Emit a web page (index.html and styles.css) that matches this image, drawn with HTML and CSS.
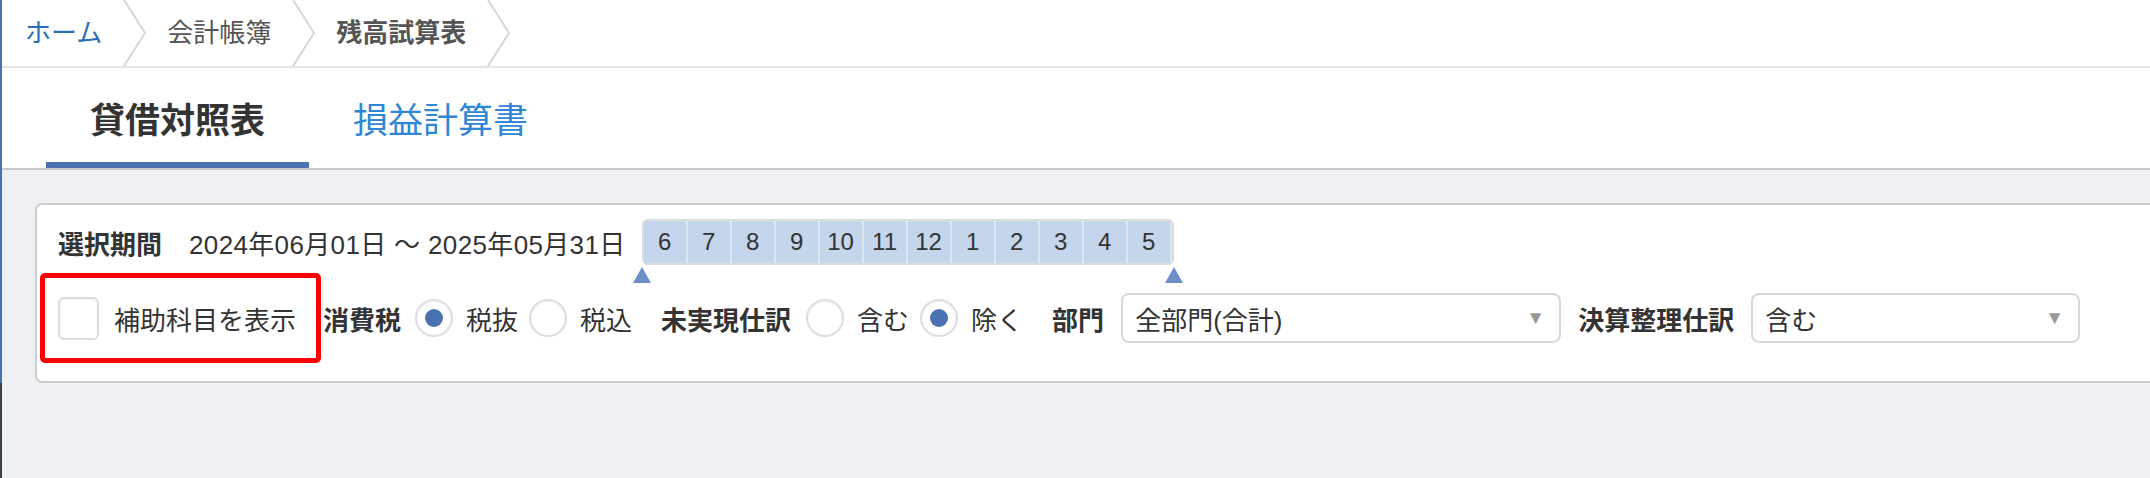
FILE: index.html
```html
<!DOCTYPE html>
<html lang="ja">
<head>
<meta charset="utf-8">
<title>残高試算表</title>
<link rel="stylesheet" href="styles.css">
</head>
<body>
<div class="app">
  <nav class="crumbs">
    <a class="crumb home">ホーム</a>
    <span class="sep"><svg width="23" height="66" viewBox="0 0 23 66"><polyline points="1,0 22,33 1,66" fill="none" stroke="#d6d6d6" stroke-width="2"/></svg></span>
    <a class="crumb">会計帳簿</a>
    <span class="sep"><svg width="23" height="66" viewBox="0 0 23 66"><polyline points="1,0 22,33 1,66" fill="none" stroke="#d6d6d6" stroke-width="2"/></svg></span>
    <span class="crumb current">残高試算表</span>
    <span class="sep"><svg width="23" height="66" viewBox="0 0 23 66"><polyline points="1,0 22,33 1,66" fill="none" stroke="#d6d6d6" stroke-width="2"/></svg></span>
  </nav>
  <div class="tabs">
    <div class="tab active">貸借対照表</div>
    <div class="tab">損益計算書</div>
  </div>
  <div class="content">
    <div class="panel">
      <div class="row period">
        <span class="label">選択期間</span>
        <span class="dates">2024年06月01日 〜 2025年05月31日</span>
        <div class="months">
          <span class="m">6</span><span class="m">7</span><span class="m">8</span><span class="m">9</span><span class="m">10</span><span class="m">11</span><span class="m">12</span><span class="m">1</span><span class="m">2</span><span class="m">3</span><span class="m">4</span><span class="m">5</span>
          <span class="handle left"></span>
          <span class="handle right"></span>
        </div>
      </div>
      <div class="row options">
        <label class="highlight"><span class="checkbox"></span><span class="text">補助科目を表示</span></label>
        <span class="label tax">消費税</span>
        <span class="radio on"></span><span class="text opt">税抜</span>
        <span class="radio"></span><span class="text opt">税込</span>
        <span class="label unreal">未実現仕訳</span>
        <span class="radio"></span><span class="text opt">含む</span>
        <span class="radio on"></span><span class="text opt">除く</span>
        <span class="label dept">部門</span>
        <div class="select dept-select"><span>全部門(合計)</span><span class="arrow">▼</span></div>
        <span class="label closing">決算整理仕訳</span>
        <div class="select closing-select"><span>含む</span><span class="arrow">▼</span></div>
      </div>
    </div>
  </div>
</div>
<div class="bottom"></div>
</body>
</html>
```

FILE: styles.css
```css
html, body {
  margin: 0;
  padding: 0;
}
body {
  width: 2150px;
  height: 478px;
  overflow: hidden;
  display: flex;
  flex-direction: column;
  background: #eff0f4;
  font-family: "Liberation Sans", "Noto Sans CJK JP", sans-serif;
  color: #333;
}
.app {
  border-left: 2px solid #4a72b0;
  overflow: hidden;
  flex: none;
}
.bottom {
  flex: 1;
  border-left: 2px solid #3b3f48;
  background: #eff0f4;
}
.crumbs {
  display: flex;
  align-items: center;
  height: 66px;
  background: #fff;
  border-bottom: 2px solid #e4e4e4;
  padding-left: 23px;
}
.crumb {
  font-size: 26px;
  color: #555;
  margin: 0 21px;
  line-height: 66px;
}
.crumb.home {
  color: #2d6fb3;
  margin-left: 0;
}
.crumb.current {
  font-weight: 700;
  color: #555;
}
.sep {
  display: flex;
  width: 23px;
  height: 66px;
}
.tabs {
  display: flex;
  height: 100px;
  background: #fff;
  border-bottom: 2px solid #cbcbcb;
  padding-left: 44px;
}
.tab {
  box-sizing: border-box;
  height: 100px;
  padding: 33px 44px 0;
  font-size: 35px;
  line-height: 40px;
  color: #2f86d4;
  border-bottom: 6px solid transparent;
}
.tab.active {
  color: #333;
  font-weight: 700;
  border-bottom-color: #4a72b0;
}
.content {
  display: flex;
  padding: 33px 0 0 33px;
  background: #eff0f4;
}
.panel {
  flex: 1;
  margin-right: -20px;
  height: 180px;
  box-sizing: border-box;
  background: #fff;
  border: 2px solid #cccccc;
  border-radius: 7px;
}
.row {
  display: flex;
  align-items: center;
}
.period {
  height: 46px;
  margin-top: 14px;
  padding-left: 21px;
}
.label {
  font-size: 26px;
  font-weight: 700;
  color: #333;
  white-space: nowrap;
}
.dates {
  font-size: 26px;
  margin-left: 27px;
  letter-spacing: 0.35px;
  white-space: nowrap;
}
.months {
  position: relative;
  display: flex;
  margin-left: 16px;
  height: 46px;
  box-sizing: border-box;
  border: 2px solid #dcdcdc;
  border-radius: 6px;
  background: #dfe6f1;
}
.m {
  width: 42px;
  height: 42px;
  margin-right: 2px;
  background: #c5d5ec;
  font-size: 24px;
  line-height: 42px;
  text-align: center;
  color: #333;
}
.m:last-of-type {
  margin-right: 0;
  width: 44px;
}
.handle {
  position: absolute;
  top: 46px;
  width: 0;
  height: 0;
  border-left: 9px solid transparent;
  border-right: 9px solid transparent;
  border-bottom: 16px solid #6b8fc6;
}
.handle.left { left: -11px; }
.handle.right { right: -11px; }
.options {
  height: 90px;
  margin-top: 8px;
  padding-left: 3px;
}
.highlight {
  display: flex;
  align-items: center;
  box-sizing: border-box;
  height: 90px;
  border: 5px solid #ff0000;
  border-radius: 5px;
  padding: 0 20px 0 13px;
}
.checkbox {
  width: 41px;
  height: 43px;
  box-sizing: border-box;
  border: 2px solid #dcdcdc;
  border-radius: 6px;
  background: #fff;
  box-shadow: inset 0 1px 2px rgba(0,0,0,0.06);
  margin-right: 15px;
}
.text {
  font-size: 26px;
  color: #333;
  white-space: nowrap;
}
.label.tax { margin-left: 2px; margin-right: 14px; }
.radio {
  position: relative;
  width: 38px;
  height: 38px;
  box-sizing: border-box;
  border: 2px solid #dedede;
  border-radius: 50%;
  background: #fff;
  box-shadow: inset 0 1px 2px rgba(0,0,0,0.07);
  margin-right: 13px;
  flex: none;
}
.radio.on::after {
  content: "";
  position: absolute;
  left: 8px;
  top: 8px;
  width: 18px;
  height: 18px;
  border-radius: 50%;
  background: #4a72b0;
}
.text.opt { margin-right: 11px; }
.label.unreal { margin-left: 18px; margin-right: 15px; }
.label.dept { margin-left: 18px; margin-right: 17px; }
.select {
  display: flex;
  align-items: center;
  justify-content: space-between;
  box-sizing: border-box;
  height: 50px;
  border: 2px solid #d8d8d8;
  border-radius: 8px;
  background: #fff;
  padding: 0 14px 0 12px;
  font-size: 26px;
  color: #333;
}
.dept-select { width: 440px; }
.closing-select { width: 329px; }
.arrow {
  font-size: 19px;
  color: #999;
}
.label.closing { margin-left: 17px; margin-right: 17px; }
```
